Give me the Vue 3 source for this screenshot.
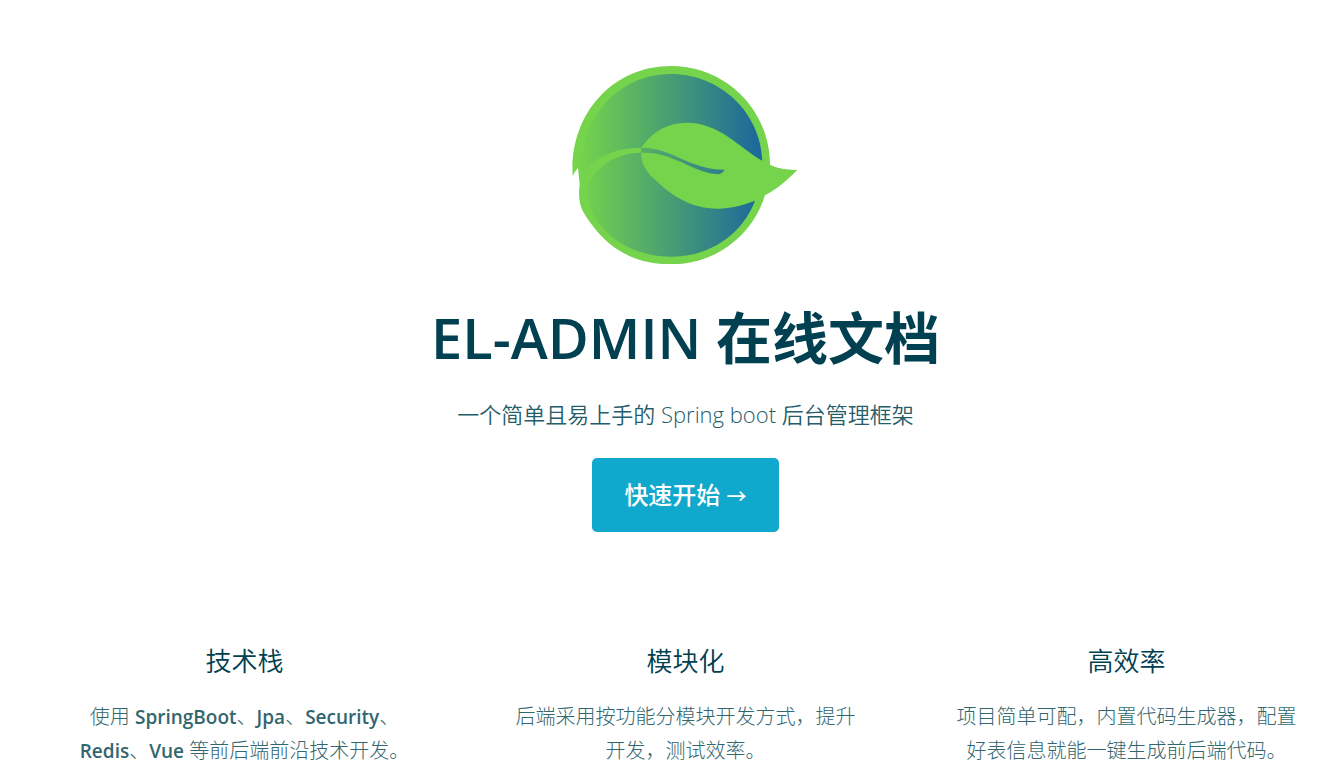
<script setup>
const features = [
  {
    title: '技术栈',
    lines: [
      [{ text: '使用 ' }, { text: 'SpringBoot', strong: true }, { text: '、' }, { text: 'Jpa', strong: true }, { text: '、' }, { text: 'Security', strong: true }, { text: '、' }],
      [{ text: 'Redis', strong: true }, { text: '、' }, { text: 'Vue', strong: true }, { text: ' 等前后端前沿技术开发。' }],
    ],
  },
  {
    title: '模块化',
    lines: [[{ text: '后端采用按功能分模块开发方式，提升' }], [{ text: '开发，测试效率。' }]],
  },
  {
    title: '高效率',
    lines: [[{ text: '项目简单可配，内置代码生成器，配置' }], [{ text: '好表信息就能一键生成前后端代码。' }]],
  },
]
</script>

<template>
  <main class="home" lang="zh-CN">
    <header class="hero">
      <svg class="logo" viewBox="33 46 690 594" role="img" aria-label="EL-ADMIN">
        <defs>
          <linearGradient id="disc" gradientUnits="userSpaceOnUse" x1="60" y1="0" x2="605" y2="0">
            <stop offset="0" stop-color="#75d44b" />
            <stop offset="1" stop-color="#1b669c" />
          </linearGradient>
        </defs>
        <path
          fill="#75d44b"
          d="M38 376C28 188 160 46 333 46C500 46 630 180 630 343C655 355 680 358 711 358C682 388 650 416 615 433C580 550 470 641 333 641C225 641 150 595 98 525C65 482 52 460 59 400L54 352C46 360 42 368 38 376Z"
        />
        <path
          fill="url(#disc)"
          d="M62 384C52 210 170 70 333 70C480 70 602 185 607 330L560 400L243 306V292C160 290 90 325 62 384Z"
        />
        <path
          fill="url(#disc)"
          d="M243 306C155 306 82 366 82 430C92 535 200 618 333 618C445 618 545 555 585 450L470 380Z"
        />
        <path
          fill="#75d44b"
          d="M243 292C275 245 320 216 380 216C480 216 538 292 607 330L630 343C655 355 680 358 711 358C682 388 650 416 615 433L585 450C540 468 500 474 470 474C400 474 340 440 290 392C263 367 243 345 243 306Z"
        />
        <path
          fill="url(#disc)"
          d="M243 291C335 289 380 355 494 357C488 368 478 372 466 370C395 363 340 303 243 306Z"
        />
      </svg>
      <h1>EL-ADMIN <span class="heavy">在线文档</span></h1>
      <p class="tagline">一个简单且易上手的 Spring boot 后台管理框架</p>
      <a class="action" href="#features">快速开始 <span class="arrow">→</span></a>
    </header>

    <section id="features" class="features">
      <article v-for="feature in features" :key="feature.title" class="feature">
        <h2>{{ feature.title }}</h2>
        <p>
          <span v-for="(line, i) in feature.lines" :key="i" class="line"><span
            v-for="(part, j) in line" :key="j" :class="{ strong: part.strong }">{{ part.text }}</span></span>
        </p>
      </article>
    </section>
  </main>
</template>

<style>
body {
  margin: 0;
  background: #fff;
}
</style>

<style scoped>
.home {
  padding: 66px 16px 10px 69px;
  font-family: "Open Sans", "Noto Sans CJK SC", sans-serif;
  color: #004050;
}

.hero {
  display: flex;
  flex-direction: column;
  align-items: center;
  text-align: center;
}

.logo {
  display: block;
  width: 230px;
  height: 198px;
}

h1 {
  margin: 39px 0 0;
  font-size: 56px;
  line-height: 68px;
  font-weight: 600;
}

.heavy {
  font-weight: 700;
}

.tagline {
  margin: 27px 0 0;
  font-size: 22px;
  line-height: 32px;
  font-weight: 350;
  color: #265d6a;
}

.action {
  margin-top: 28px;
  padding: 20px 32px;
  border-radius: 5px;
  background: #11a8cd;
  color: #fff;
  font-size: 24px;
  line-height: 34px;
  font-weight: 500;
  text-decoration: none;
}

.arrow {
  font-size: 20px;
  line-height: 20px;
}

.features {
  display: grid;
  grid-template-columns: repeat(3, 1fr);
  gap: 90px;
  margin-top: 112px;
  text-align: center;
}

h2 {
  margin: 0;
  font-size: 26px;
  line-height: 34px;
  font-weight: 350;
}

.feature p {
  margin: 22px 0 0;
  font-size: 20px;
  line-height: 34px;
  font-weight: 300;
  color: #33666f;
}

.line {
  display: block;
  height: 34px;
  white-space: pre;
}

.strong {
  font-size: 19px;
  font-weight: 600;
}
</style>
